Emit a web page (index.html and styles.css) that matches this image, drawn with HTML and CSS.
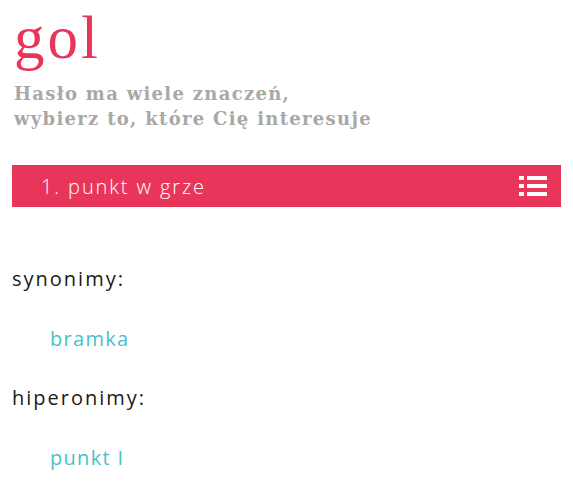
FILE: index.html
```html
<!DOCTYPE html>
<html lang="pl">
<head>
<meta charset="utf-8">
<link rel="stylesheet" href="styles.css">
</head>
<body>
<header class="head">
  <h1 class="word">gol</h1>
  <p class="hint">Hasło ma wiele znaczeń,<br>wybierz to, które Cię interesuje</p>
</header>
<div class="bar">
  <span class="bar-title">1. punkt w grze</span>
  <svg class="bar-icon" width="28" height="22" viewBox="0 0 28 22">
    <rect x="0" y="1" width="5" height="4" fill="#fff"/>
    <rect x="8" y="1" width="20" height="4" fill="#fff"/>
    <rect x="0" y="9" width="5" height="4" fill="#fff"/>
    <rect x="8" y="9" width="20" height="4" fill="#fff"/>
    <rect x="0" y="17" width="5" height="4" fill="#fff"/>
    <rect x="8" y="17" width="20" height="4" fill="#fff"/>
  </svg>
</div>
<section class="rel">
  <h2 class="rel-label">synonimy:</h2>
  <a class="rel-item">bramka</a>
  <h2 class="rel-label">hiperonimy:</h2>
  <a class="rel-item">punkt I</a>
</section>
</body>
</html>
```
FILE: styles.css
```css
html, body { margin: 0; padding: 0; background: #fff; }
body { padding: 0 12px; }
.head { padding-top: 3px; }
.word {
  margin: 0;
  font-family: "Liberation Serif", serif;
  font-weight: normal;
  font-size: 61px;
  line-height: 70px;
  letter-spacing: 3px;
  color: #e8365a;
  padding-left: 2px;
}
.hint {
  margin: 8px 0 0 2px;
  font-family: "DejaVu Serif", serif;
  font-weight: bold;
  font-size: 18px;
  line-height: 25px;
  letter-spacing: 1.3px;
  color: #a8a8a8;
}
.bar {
  margin-top: 34px;
  height: 42px;
  background: #e8365a;
  display: flex;
  align-items: center;
  justify-content: space-between;
  padding: 0 14px 0 29px;
}
.bar-title {
  font-family: "Open Sans", sans-serif;
  font-weight: 300;
  font-size: 20px;
  color: #fff;
  letter-spacing: 1.9px;
}
.bar-icon { display: block; }
.rel { padding-top: 58px; }
.rel-label {
  margin: 0;
  font-family: "Open Sans", sans-serif;
  font-weight: normal;
  font-size: 20px;
  line-height: 28px;
  letter-spacing: 2px;
  color: #1a1a1a;
}
.rel-item {
  display: block;
  margin: 32px 0 31px 38px;
  font-family: "Open Sans", sans-serif;
  font-size: 20px;
  line-height: 28px;
  letter-spacing: 1.3px;
  color: #4cbfca;
}
```
